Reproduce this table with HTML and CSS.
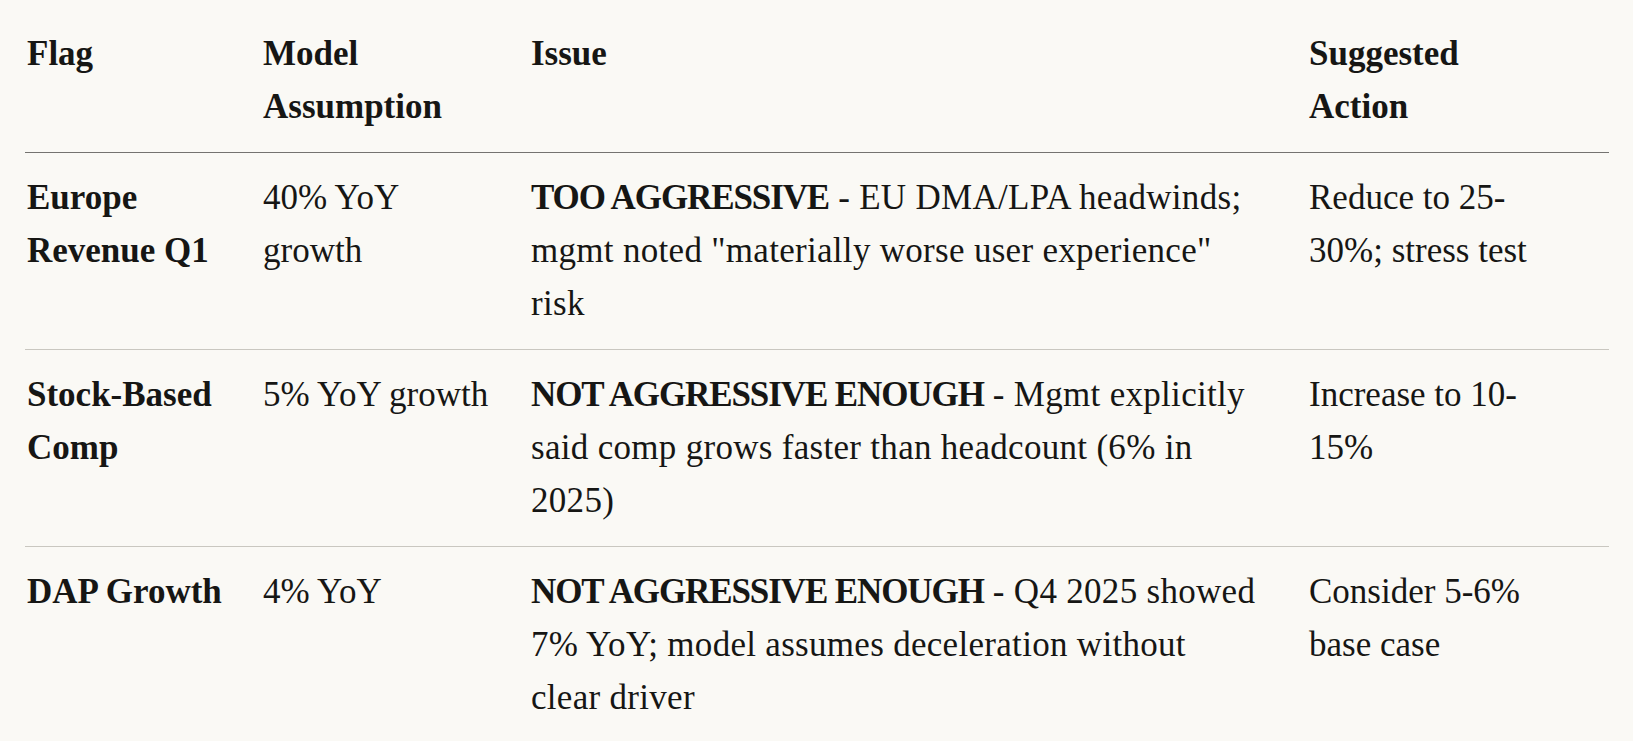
FILE: index.html
```html
<!DOCTYPE html>
<html lang="en">
<head>
<meta charset="utf-8">
<title>Model flags</title>
<link rel="stylesheet" href="styles.css">
</head>
<body>
<table class="flags">
  <colgroup>
    <col class="c-flag">
    <col class="c-model">
    <col class="c-issue">
    <col class="c-action">
  </colgroup>
  <thead>
    <tr>
      <th>Flag</th>
      <th>Model Assumption</th>
      <th>Issue</th>
      <th>Suggested<br>Action</th>
    </tr>
  </thead>
  <tbody>
    <tr>
      <td><strong>Europe Revenue Q1</strong></td>
      <td>40% YoY growth</td>
      <td class="issue"><strong class="verdict">TOO AGGRESSIVE</strong> - EU DMA/LPA headwinds;<br>mgmt noted "materially worse user experience"<br>risk</td>
      <td>Reduce to 25-30%; stress test</td>
    </tr>
    <tr>
      <td><strong>Stock-Based Comp</strong></td>
      <td>5% YoY growth</td>
      <td class="issue"><strong class="verdict">NOT AGGRESSIVE ENOUGH</strong> - Mgmt explicitly<br>said comp grows faster than headcount (6% in<br>2025)</td>
      <td>Increase to 10-15%</td>
    </tr>
    <tr>
      <td><strong>DAP Growth</strong></td>
      <td>4% YoY</td>
      <td class="issue"><strong class="verdict">NOT AGGRESSIVE ENOUGH</strong> - Q4 2025 showed<br>7% YoY; model assumes deceleration without<br>clear driver</td>
      <td>Consider 5-6% base case</td>
    </tr>
  </tbody>
</table>
</body>
</html>
```

FILE: styles.css
```css
html, body {
  background: #faf9f5;
}

body {
  margin: 9px 0 0 25px;
  color: #161614;
  font-family: "Liberation Serif", "Times New Roman", serif;
  font-size: 35px;
  line-height: 53px;
}

.flags {
  border-collapse: collapse;
  table-layout: fixed;
  width: 1584px;
}

.c-flag { width: 236px; }
.c-model { width: 268px; }
.c-issue { width: 778px; }
.c-action { width: 302px; }

.flags th,
.flags td {
  text-align: left;
  vertical-align: top;
  padding: 18px 34px 19px 2px;
}

.flags th {
  font-weight: 700;
}

.flags strong {
  font-weight: 700;
}

.flags .issue {
  white-space: nowrap;
  letter-spacing: 0.3px;
}

.flags .verdict {
  letter-spacing: -1.1px;
}

.flags thead tr {
  border-bottom: 1px solid #747370;
}

.flags tbody tr {
  border-bottom: 1px solid #c9c7c0;
}

.flags tbody tr:last-child {
  border-bottom: none;
}
```
